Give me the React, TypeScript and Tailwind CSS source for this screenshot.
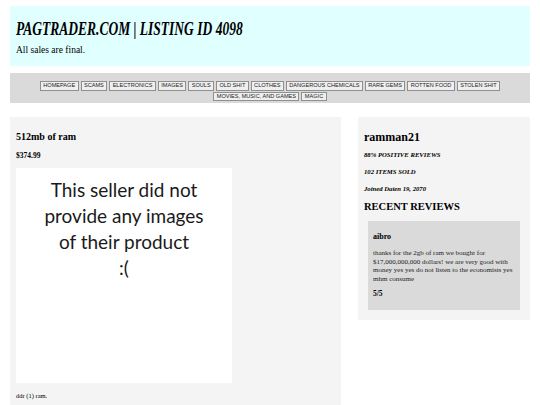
const categories = [
  "HOMEPAGE",
  "SCAMS",
  "ELECTRONICS",
  "IMAGES",
  "SOULS",
  "OLD SHIT",
  "CLOTHES",
  "DANGEROUS CHEMICALS",
  "RARE GEMS",
  "ROTTEN FOOD",
  "STOLEN SHIT",
  "MOVIES, MUSIC, AND GAMES",
  "MAGIC",
]

export default function App() {
  return (
    <div className="w-[540px] h-[405px] overflow-hidden bg-white px-[10px] pt-[6px] text-black font-['Liberation_Serif',serif]">
      <header className="bg-[#e0ffff] h-[60px] px-[6px] pt-[12px]">
        <h1 className="text-[18px] leading-[22px] font-bold italic whitespace-nowrap scale-x-75 origin-left">
          PAGTRADER.COM | LISTING ID 4098
        </h1>
        <p className="text-[9.5px] leading-[12px] mt-[4px]">All sales are final.</p>
      </header>

      <nav className="bg-[#dadada] mt-[7px] h-[30px] px-[6px] pt-[8px] flex flex-wrap justify-center content-start gap-x-[2px] gap-y-[1px]">
        {categories.map((c) => (
          <button
            key={c}
            className="h-[9.5px] px-[2.4px] border border-[#8f8f8f] bg-[#efefef] text-[5.6px] leading-[7px] text-[#222] font-['Liberation_Sans',sans-serif]"
          >
            {c}
          </button>
        ))}
      </nav>

      <div className="mt-[14px] flex items-start gap-[17px]">
        <main className="w-[331px] shrink-0 h-[300px] bg-[#f4f4f4] px-[6px] pt-[14px]">
          <h2 className="text-[10px] leading-[12px] font-bold">512mb of ram</h2>
          <p className="text-[7.5px] leading-[9px] font-bold mt-[8px]">$374.99</p>
          <div className="mt-[8px] w-[216px] h-[215px] bg-white pt-[9px] text-center text-[19px] leading-[26px] text-[#1a1a1a] font-['Lato',sans-serif]">
            <p>This seller did not</p>
            <p>provide any images</p>
            <p>of their product</p>
            <p>:(</p>
          </div>
          <p className="text-[6.5px] leading-[8px] mt-[9px]">ddr (1) ram.</p>
        </main>

        <aside className="w-[172px] shrink-0 bg-[#f4f4f4] px-[6px] pt-[13px] pb-[10px]">
          <h2 className="text-[12px] leading-[14px] font-bold">ramman21</h2>
          <p className="text-[6.7px] leading-[8px] font-bold italic mt-[7px]">88% POSITIVE REVIEWS</p>
          <p className="text-[6.7px] leading-[8px] font-bold italic mt-[9px]">102 ITEMS SOLD</p>
          <p className="text-[6.7px] leading-[8px] font-bold italic mt-[9px]">Joined Daten 19, 2070</p>
          <h3 className="text-[10.5px] leading-[13px] font-bold mt-[7px]">RECENT REVIEWS</h3>
          <div className="mt-[8px] mx-[4px] bg-[#dadada] px-[5px] pt-[11px] pb-[12px]">
            <h4 className="text-[8px] leading-[10px] font-bold">aibro</h4>
            <p className="text-[7px] leading-[8.5px] mt-[7px] text-[#222] whitespace-nowrap">
              thanks for the 2gb of ram we bought for
              <br />
              $17,000,000,000 dollars! we are very good with
              <br />
              money yes yes do not listen to the economists yes
              <br />
              mhm consume
            </p>
            <p className="text-[7.5px] leading-[9px] font-bold mt-[6px]">5/5</p>
          </div>
        </aside>
      </div>
    </div>
  )
}
